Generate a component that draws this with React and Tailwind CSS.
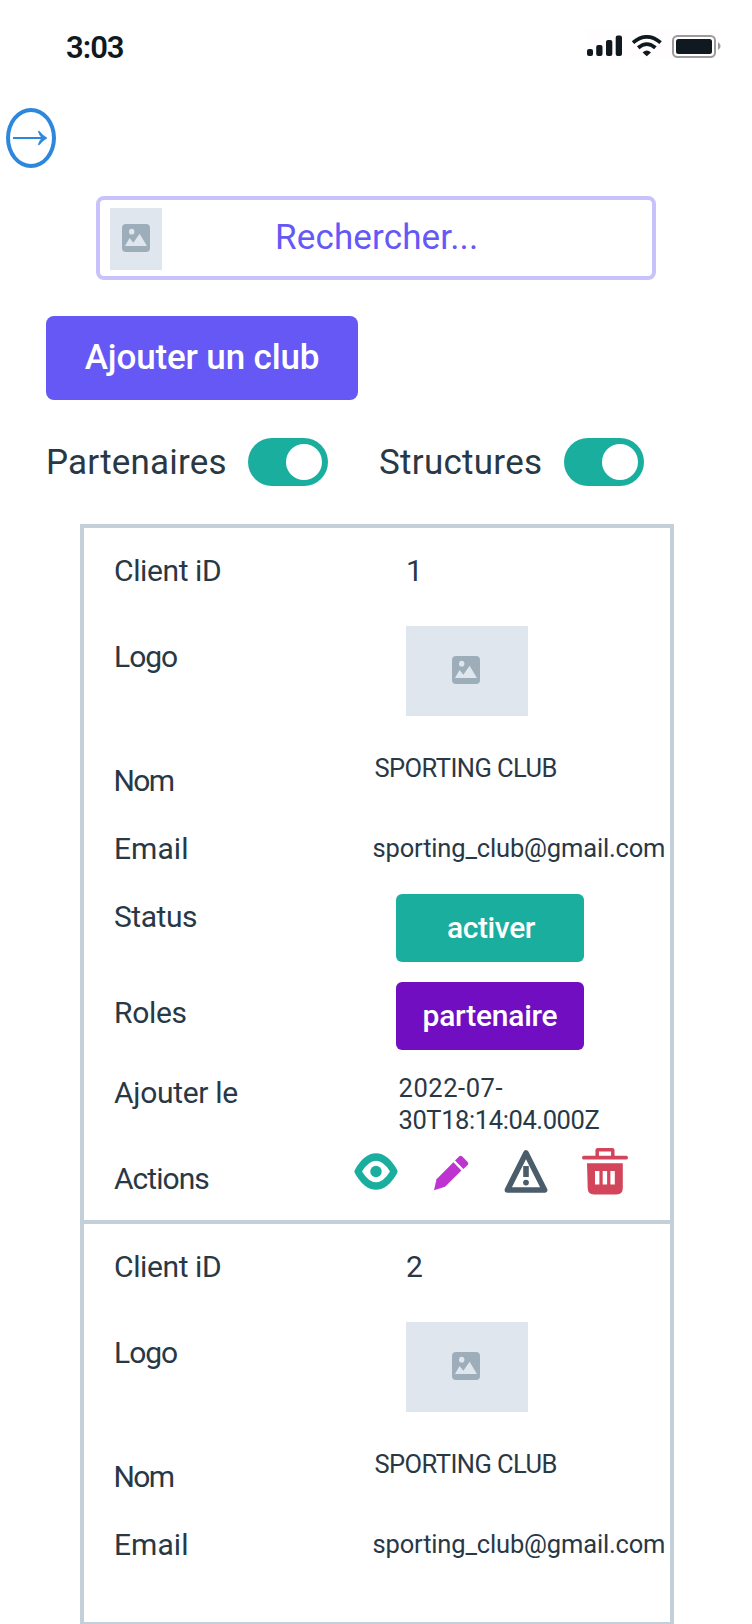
const labels = [
  { text: "Client iD", cls: "mt-[25px] ml-[30px] tracking-[-0.39px]" },
  { text: "Logo", cls: "mt-[50px] ml-[30px] tracking-[-1px]" },
  { text: "Nom", cls: "mt-[88px] ml-[29.5px] tracking-[-1.6px]" },
  { text: "Email", cls: "mt-8 ml-[30px] tracking-[0.05px]" },
];

const extraLabels = [
  { text: "Status", cls: "mt-8 ml-[30px] tracking-[-0.46px]" },
  { text: "Roles", cls: "mt-[60px] ml-[30px] tracking-[-0.3px]" },
  { text: "Ajouter le", cls: "mt-[44px] ml-[30px] tracking-[-0.3px]" },
  { text: "Actions", cls: "mt-[50px] ml-[30px] tracking-[-0.95px]" },
];

function ImageGlyph({ className }) {
  return (
    <svg viewBox="0 0 28 28" className={className} preserveAspectRatio="none">
      <rect width="28" height="28" rx="4" fill="#9eadba" />
      <ellipse cx="9.7" cy="7.7" rx="2.7" ry="2.9" fill="#dfe6ee" />
      <path d="M3 22 L7.6 14 L11.3 18.8 L17.6 9.8 L25 22 Z" fill="#dfe6ee" />
    </svg>
  );
}

function StatusBar() {
  return (
    <header className="flex h-[92px] items-start justify-between pl-[66px] pr-[31px] pt-[29px]">
      <span className="pt-px text-[31px] font-semibold leading-9 tracking-[-1px] text-[#101920]">3:03</span>
      <div className="flex bg-[#fffdfd] pt-[6px]">
        <svg width="36" height="21" viewBox="0 0 36 21" fill="#101920">
          <rect x="0" y="14" width="6" height="7" rx="2" />
          <rect x="9.2" y="10" width="6.3" height="11" rx="2" />
          <rect x="19" y="5" width="6.3" height="16" rx="2" />
          <rect x="28.7" y="0.5" width="6.3" height="20.5" rx="2" />
        </svg>
        <svg className="ml-[8px]" width="32" height="22" viewBox="0 0 32 22" fill="none" stroke="#101920" strokeWidth="3.8">
          <path d="M2 7.6 Q15.8 -3.8 29.6 7.6" />
          <path d="M7.2 12.8 Q15.8 5.4 24.4 12.8" />
          <path d="M11.6 17.4 Q15.8 13.4 20 17.4 L15.8 21.2 Z" fill="#101920" stroke="none" />
        </svg>
        <svg className="ml-[9px]" width="49" height="23" viewBox="0 0 49 23">
          <rect x="1" y="1" width="42" height="21" rx="4.5" fill="#fff" stroke="#9d9b9d" strokeWidth="2" />
          <rect x="4" y="4" width="36" height="15" rx="2.5" fill="#101920" />
          <path d="M46 7 Q48.6 8.8 48.6 11 T46 15 Z" fill="#9d9b9d" />
        </svg>
      </div>
    </header>
  );
}

function Toggle() {
  return (
    <button className="flex h-12 w-20 items-center justify-end rounded-full bg-[#1aae9f] pr-1.5">
      <span className="size-9 rounded-full bg-white" />
    </button>
  );
}

function Actions() {
  return (
    <div className="mt-3 flex h-[46px] items-start">
      <svg className="mt-[5px] ml-[-2.5px]" width="44" height="37" viewBox="0 0 44 37">
        <path d="M0.8 20 Q0 18.5 0.8 17 C7 6 14 0.3 22 0.3 S37 6 43.2 17 Q44 18.5 43.2 20 C37 31 30 36.8 22 36.8 S7 31 0.8 20 Z" fill="#1aae9f" />
        <path d="M8 18.5 Q14.5 7.8 22 7.8 T36 18.5 Q29.5 29.2 22 29.2 T8 18.5 Z" fill="#fff" />
        <circle cx="22" cy="18.5" r="5.7" fill="#1aae9f" />
      </svg>
      <svg className="ml-[35.5px] mt-[7px]" width="36" height="36" viewBox="0 0 36 36" fill="#bd34d1">
        <path d="M1 35.3 L3.5 24.2 L20.4 7.2 L28.4 15.4 L12 31.8 Z" />
        <path d="M22 5.5 L26.3 1.3 Q27.6 0.2 29 1.3 L34.7 7 Q36 8.5 34.7 9.9 L30.4 13.9 Z" />
      </svg>
      <svg className="ml-[34.5px] mt-[1px]" width="44" height="45" viewBox="0 0 44 45">
        <path d="M22 4 L40.6 41 H3.4 Z" fill="#fff" stroke="#4b5c6b" strokeWidth="5.6" strokeLinejoin="round" />
        <path d="M19.2 17 h5.6 v11 h-5.6 z" fill="#4b5c6b" />
        <circle cx="22" cy="33.6" r="2.9" fill="#4b5c6b" />
      </svg>
      <svg className="ml-[34.5px]" width="46" height="47" viewBox="0 0 46 47">
        <path d="M15.2 9.5 V2.5 Q15.2 1.8 16 1.8 H30 Q30.8 1.8 30.8 2.5 V9.5" fill="none" stroke="#d3455b" strokeWidth="3.5" />
        <rect x="0" y="7.8" width="46" height="3.8" rx="1.9" fill="#d3455b" />
        <path d="M5 15.2 H40.8 V40 Q40.8 46.5 34.5 46.5 H12 Q5.7 46.5 5.7 40 Z" fill="#d3455b" />
        <path d="M13 23 h4.4 v13.5 h-4.4 z M20.7 23 h4.4 v13.5 h-4.4 z M28.4 23 h4.4 v13.5 h-4.4 z" fill="#fff" />
      </svg>
    </div>
  );
}

function ClubCard({ id, full, className }) {
  const rows = full ? [...labels, ...extraLabels] : labels;
  return (
    <article className={`flex w-[594px] shrink-0 border-4 border-[#c3cfd9] ${className}`}>
      <div className="flex w-[272px] shrink-0 flex-col items-start">
        {rows.map((row) => (
          <span key={row.text} className={`text-[30px] leading-9 whitespace-nowrap ${row.cls}`}>
            {row.text}
          </span>
        ))}
      </div>
      <div className="flex flex-col items-start whitespace-nowrap text-[25.5px] leading-8">
        <span className="mt-[25px] ml-[50px] text-[30px] leading-9">{id}</span>
        <div className="mt-[37px] ml-[50px] flex h-[90px] w-[122px] items-start justify-center bg-[#dfe6ee] pt-[30px]">
          <ImageGlyph className="mr-0.5 h-7 w-7" />
        </div>
        <span className="mt-9 ml-[18.5px] tracking-[-0.56px]">SPORTING CLUB</span>
        <span className="mt-12 ml-[16.5px] tracking-[-0.16px]">sporting_club@gmail.com</span>
        {full && (
          <>
            <button className="mt-[30px] ml-10 h-[68px] w-[188px] rounded-md bg-[#1aae9f] pl-[2px] text-[30px] font-medium tracking-[-0.4px] text-white">
              activer
            </button>
            <button className="mt-5 ml-10 h-[68px] w-[188px] rounded-md bg-[#710ec1] text-[30px] font-medium tracking-[-0.25px] text-white">
              partenaire
            </button>
            <p className="mt-[22px] ml-[42.5px]">
              <span className="block tracking-[0.57px]">2022-07-</span>
              <span className="block tracking-[-0.4px]">30T18:14:04.000Z</span>
            </p>
            <Actions />
          </>
        )}
      </div>
    </article>
  );
}

export default function App() {
  return (
    <main className="flex h-[1624px] w-[752px] flex-col items-start overflow-hidden bg-white font-['Roboto',sans-serif] text-[#293845]">
      <div className="w-full shrink-0">
        <StatusBar />
      </div>
      <button className="mt-4 ml-1.5 flex h-[60px] w-[50px] shrink-0 items-center justify-center rounded-[50%] border-4 border-[#2d88dd]">
        <svg className="mr-[2px] shrink-0" width="36" height="16" viewBox="0 0 36 16">
          <path d="M1 8 H33" stroke="#2d88dd" strokeWidth="2" />
          <path d="M26.2 1.2 Q27.5 5.6 30 8 Q27.5 10.4 26.2 14.8 L27.4 14.8 Q30 11 35 8 Q30 5 27.4 1.2 Z" fill="#2d88dd" stroke="#2d88dd" strokeWidth="0.6" />
        </svg>
      </button>
      <div className="mt-7 ml-24 flex h-[84px] w-[560px] shrink-0 items-center rounded-lg border-4 border-[#c7c1fc] bg-white">
        <div className="mt-0.5 ml-2.5 flex h-[62px] w-[52px] items-start justify-center bg-[#dfe6ee] pt-4">
          <ImageGlyph className="h-7 w-7" />
        </div>
        <span className="ml-[113px] text-[35px] leading-10 tracking-[0.15px] text-[#6558f5]">Rechercher...</span>
      </div>
      <button className="mt-9 ml-[46px] h-[84px] w-[312px] shrink-0 rounded-lg bg-[#6558f5] text-[35px] font-medium tracking-[-0.15px] text-white">
        Ajouter un club
      </button>
      <div className="mt-[38px] ml-[46px] flex h-12 shrink-0 items-center text-[35px] leading-10">
        <span className="w-[202px] pt-0.5 tracking-[0.19px]">Partenaires</span>
        <Toggle />
        <span className="ml-[51px] w-[185px] pt-0.5 tracking-[0.27px]">Structures</span>
        <Toggle />
      </div>
      <ClubCard id="1" full className="mt-[38px] ml-20 h-[700px]" />
      <ClubCard id="2" className="-mt-1 ml-20 h-[406px]" />
    </main>
  );
}
